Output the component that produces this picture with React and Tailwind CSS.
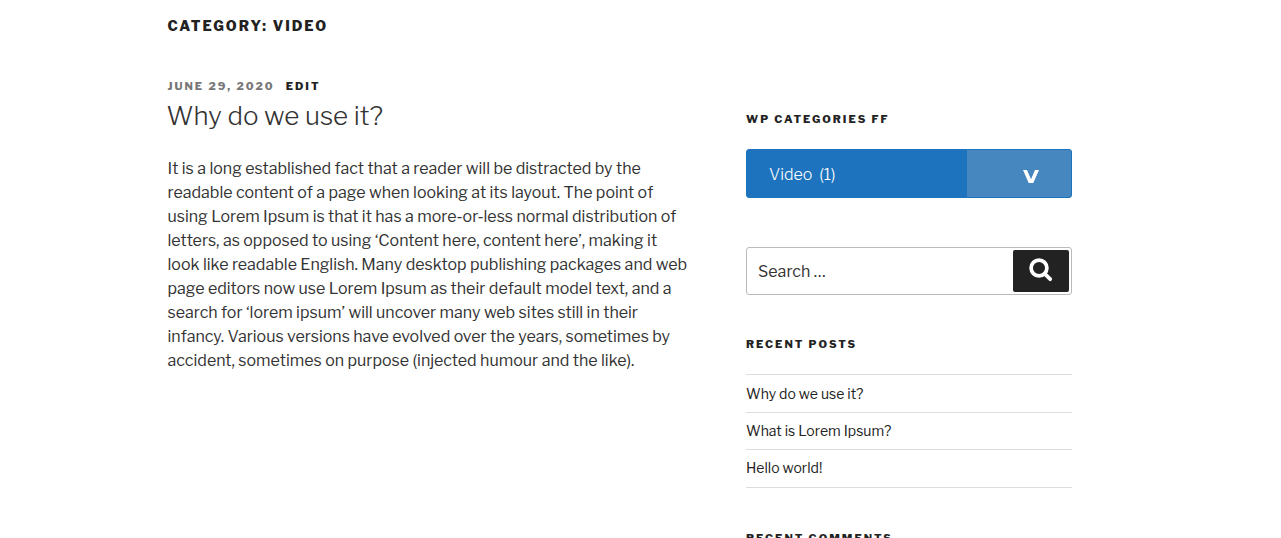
import React from "react";

const body =
  "It is a long established fact that a reader will be distracted by the readable content of a page when looking at its layout. The point of using Lorem Ipsum is that it has a more-or-less normal distribution of letters, as opposed to using ‘Content here, content here’, making it look like readable English. Many desktop publishing packages and web page editors now use Lorem Ipsum as their default model text, and a search for ‘lorem ipsum’ will uncover many web sites still in their infancy. Various versions have evolved over the years, sometimes by accident, sometimes on purpose (injected humour and the like).";

const posts = ["Why do we use it?", "What is Lorem Ipsum?", "Hello world!"];

function WidgetTitle({ children }) {
  return (
    <h2 className="mb-5 text-[11px] leading-5 font-extrabold tracking-[2px] text-[#222] uppercase">
      {children}
    </h2>
  );
}

function SearchIcon() {
  return (
    <svg viewBox="0 0 24 24" className="h-6 w-6" fill="none" stroke="currentColor" aria-hidden="true">
      <circle cx="10" cy="10" r="7.9" strokeWidth="3.7" />
      <path d="M15.8 15.8 21.2 21.2" strokeWidth="3.8" strokeLinecap="round" />
    </svg>
  );
}

export default function App() {
  return (
    <div className="bg-white pr-[42px] font-['Libre_Franklin','Inter',sans-serif] text-[#333]">
      <div className="mx-auto w-full max-w-[904px] pt-4">
        <header>
          <h1 className="text-sm leading-5 font-extrabold tracking-[2px] text-[#222] uppercase">Category: Video</h1>
        </header>
        <div className="flex justify-between pt-10">
          <main className="w-[58%]">
            <article>
              <div className="flex gap-[11px] text-[11px] leading-5 font-extrabold tracking-[2px] uppercase">
                <time dateTime="2020-06-29" className="text-[#767676]">June 29, 2020</time>
                <a href="#edit" className="text-[#222]">Edit</a>
              </div>
              <h2 className="-ml-px text-[26px] leading-10 font-light">
                <a href="#post">Why do we use it?</a>
              </h2>
              <p className="pt-[21px] text-[16px] leading-6">{body}</p>
            </article>
          </main>
          <aside className="w-[36%] pt-[33px]">
            <section className="pb-[49px]">
              <WidgetTitle>WP Categories FF</WidgetTitle>
              <button
                type="button"
                className="flex h-[49px] w-full items-stretch overflow-hidden rounded-[3px] border border-[#1e73be] bg-[#1e73be] text-[16px] text-white"
              >
                <span className="flex flex-1 items-center gap-[7px] pt-[2px] pl-[22px] font-light">
                  <span>Video</span>
                  <span>(1)</span>
                </span>
                <span className="flex w-[104px] items-center justify-center bg-[#4787bf] pl-6">
                  <svg viewBox="0 0 16 13" className="mt-[6px] h-[13px] w-4" fill="currentColor" aria-hidden="true">
                    <path d="M0 0h4L8 9.2 12 0H16L10.3 13H5.7Z" />
                  </svg>
                </span>
              </button>
            </section>
            <form
              role="search"
              className="mb-[39px] flex h-12 items-stretch rounded-[3px] border border-[#bbb] bg-white p-[2px]"
              onSubmit={(e) => e.preventDefault()}
            >
              <label htmlFor="search" className="sr-only">Search for:</label>
              <input
                id="search"
                type="search"
                placeholder="Search …"
                className="min-w-0 flex-1 pt-px pl-[9px] text-[16px] outline-none placeholder:text-[#333]"
              />
              <button
                type="submit"
                aria-label="Search"
                className="flex w-14 items-center justify-center rounded-[2px] bg-[#222] pb-[2px] text-white"
              >
                <SearchIcon />
              </button>
            </form>
            <section className="pb-10">
              <WidgetTitle>Recent Posts</WidgetTitle>
              <ul className="border-t border-[#ddd]">
                {posts.map((p) => (
                  <li key={p} className="border-b border-[#ddd] py-2 text-sm leading-5 text-[#222] first:pt-[9px] last:pb-[9px]">
                    <a href="#post">{p}</a>
                  </li>
                ))}
              </ul>
            </section>
            <section>
              <WidgetTitle>Recent Comments</WidgetTitle>
            </section>
          </aside>
        </div>
      </div>
    </div>
  );
}
